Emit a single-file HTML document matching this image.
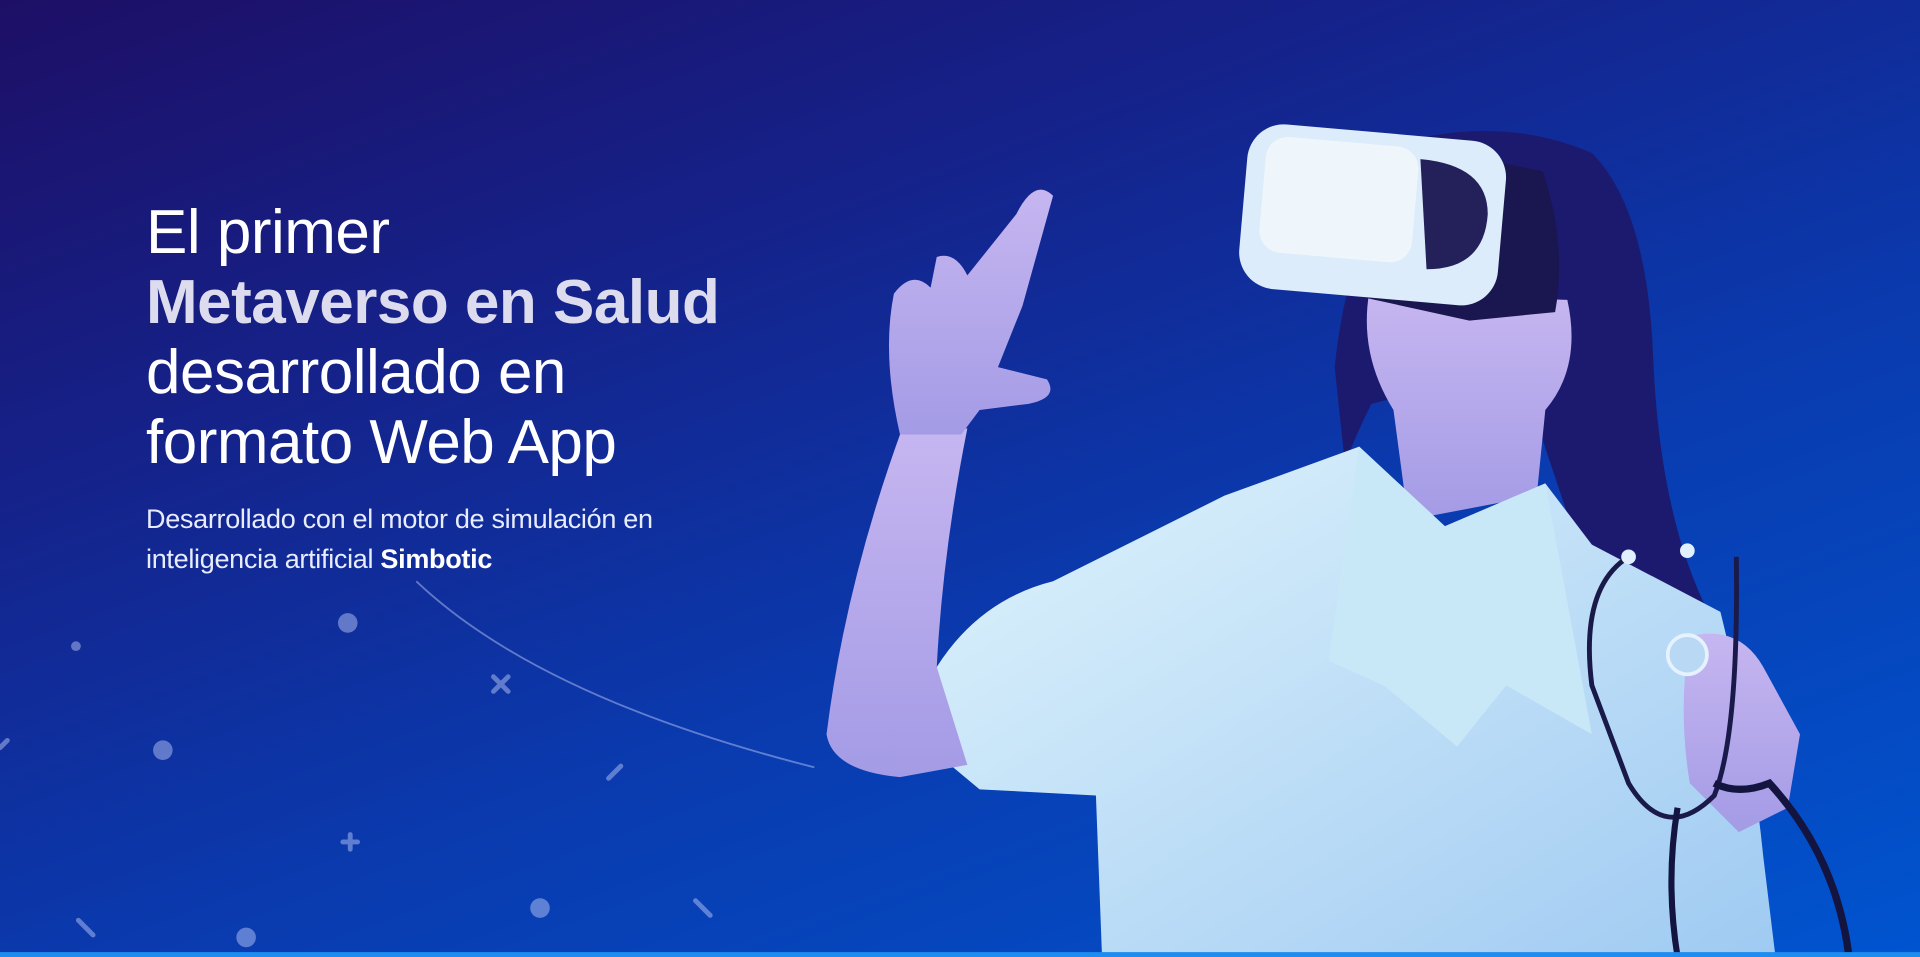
<!DOCTYPE html>
<html><head><meta charset="utf-8"><style>
html,body{margin:0;padding:0;}
body{width:1920px;height:957px;overflow:hidden;position:relative;font-family:"Liberation Sans",sans-serif;
background:linear-gradient(160deg,#1d0f66 0%,#15228a 30%,#0a3aae 60%,#0054cf 100%);}
svg{position:absolute;left:0;top:0;}
.h{position:absolute;left:146px;top:198px;color:#fff;font-size:62px;line-height:70px;letter-spacing:-0.5px;}
.h b{color:#dcdcee;}
.s{position:absolute;left:146px;top:499px;color:#e8ecff;font-size:27px;line-height:40px;letter-spacing:-0.3px;}
.s b{font-weight:bold;color:#fff;}
</style></head><body>
<svg width="1920" height="957" viewBox="0 0 1568 782" preserveAspectRatio="none">
<defs>
<linearGradient id="sh" x1="0" y1="0" x2="1" y2="1"><stop offset="0" stop-color="#e0f4fc"/><stop offset="1" stop-color="#9fcaf2"/></linearGradient>
<linearGradient id="sk" x1="0" y1="0" x2="0" y2="1"><stop offset="0" stop-color="#c6b6f0"/><stop offset="1" stop-color="#a49be6"/></linearGradient>
</defs>
<g fill="rgba(200,210,255,0.45)" stroke="rgba(200,210,255,0.45)" stroke-width="4" stroke-linecap="round">
<circle cx="284" cy="509" r="8" stroke="none"/><circle cx="62" cy="528" r="4" stroke="none"/>
<circle cx="133" cy="613" r="8" stroke="none"/><circle cx="441" cy="742" r="8" stroke="none"/>
<circle cx="201" cy="766" r="8" stroke="none"/>
<path d="M286 682v12M280 688h12M403 553l12 12M415 553l-12 12M497 636l10-10M568 736l12 12M64 752l12 12M0 611l6-6" fill="none"/>
</g>
<path d="M340 475 Q440 570 665 627" fill="none" stroke="rgba(200,210,255,0.45)" stroke-width="1.5"/>
<path d="M1150 115 Q1230 95 1300 125 Q1345 170 1350 290 Q1355 420 1395 500 L1330 512 Q1290 490 1280 420 L1240 300 L1120 330 Q1090 390 1100 395 L1090 300 Q1100 200 1150 115Z" fill="#1c1a6e"/>
<path d="M1118 240 L1280 245 Q1292 300 1262 335 L1255 405 L1150 425 L1138 335 Q1110 290 1118 240Z" fill="url(#sk)"/>
<path d="M765 545 Q800 490 860 475 L1000 405 L1110 365 L1180 430 L1262 395 L1300 445 L1405 500 Q1430 600 1440 700 L1450 782 L900 782 L895 650 L800 645 L770 620Z" fill="url(#sh)"/>
<path d="M1110 365 L1085 540 L1130 560 L1190 610 L1230 560 L1300 600 L1262 395 L1180 430Z" fill="#c8e8f8"/>
<path d="M675 600 Q690 480 735 355 L790 350 Q770 450 765 545 L790 625 L735 635 Q680 630 675 600Z" fill="url(#sk)"/>
<path d="M730 240 Q745 220 760 235 L765 210 Q780 205 790 225 L830 175 Q845 145 860 160 L835 250 L815 300 L855 310 Q865 325 840 330 L800 335 L785 355 L735 355 Q720 290 730 240Z" fill="url(#sk)"/>
<path d="M1380 520 Q1420 510 1440 545 L1470 600 L1460 660 L1420 680 L1380 640 Q1370 580 1380 520Z" fill="url(#sk)"/>
<path d="M1150 118 L1260 140 Q1280 200 1270 255 L1200 262 L1100 240Z" fill="#1a1650"/>
<rect x="1015" y="108" width="212" height="135" rx="30" fill="#dcecfa" transform="rotate(5 1120 175)"/>
<rect x="1030" y="118" width="125" height="95" rx="18" fill="#eef6fc" transform="rotate(5 1120 175)"/>
<path d="M1160 130 Q1215 135 1215 175 Q1212 220 1165 220Z" fill="#24205a"/>
<path d="M1330 455 Q1290 480 1300 560 L1330 640 Q1360 690 1400 650 Q1420 600 1418 455" fill="none" stroke="#1a1a4a" stroke-width="4"/>
<path d="M1400 640 Q1420 650 1445 640 Q1500 700 1510 782" fill="none" stroke="#141440" stroke-width="6"/>
<path d="M1370 660 Q1360 720 1370 782" fill="none" stroke="#141440" stroke-width="5"/>
<circle cx="1330" cy="455" r="6" fill="#e0f0ff"/><circle cx="1378" cy="450" r="6" fill="#e0f0ff"/>
<circle cx="1378" cy="535" r="16" fill="#b8d8f4" stroke="#e6f2ff" stroke-width="3"/>
<rect x="0" y="778" width="1568" height="4" fill="#1e8cf0"/>
</svg>
<div class="h">El primer<br><b>Metaverso en Salud</b><br>desarrollado en<br>formato Web App</div>
<div class="s">Desarrollado con el motor de simulación en<br>inteligencia artificial <b>Simbotic</b></div>
</body></html>
